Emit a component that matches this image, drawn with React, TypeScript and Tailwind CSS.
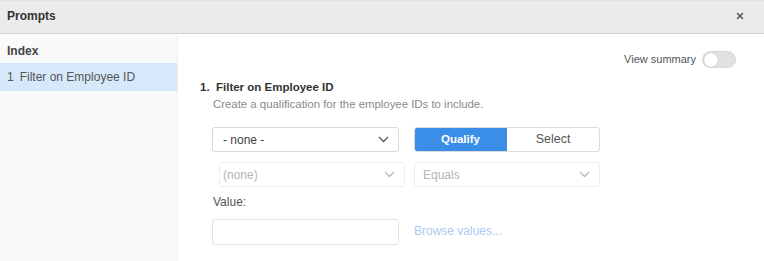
import { X } from 'lucide-react'

function Chevron({ className }: { className: string }) {
  return (
    <svg width="11" height="7" viewBox="0 0 11 7" className={className} fill="none">
      <polyline points="1,1 5.5,5.5 10,1" stroke="currentColor" strokeWidth="1.3" />
    </svg>
  )
}

export default function App() {
  return (
    <div
      className="w-[764px] h-[261px] flex flex-col bg-white overflow-hidden"
      style={{ fontFamily: '"Liberation Sans", Arial, sans-serif' }}
    >
      {/* header */}
      <div className="h-[34px] shrink-0 flex items-center justify-between bg-[#ebebeb] border-t border-[#e2e2e2] border-b border-b-[#d4d4d4] pl-[7px] pr-[19px] pb-[2px]">
        <span className="text-[12px] font-bold text-[#333]">Prompts</span>
        <X className="w-[10px] h-[10px] text-[#555]" strokeWidth={3.5} />
      </div>

      <div className="flex flex-1 min-h-0">
        {/* index sidebar */}
        <div className="w-[178px] shrink-0 bg-[#fafafa] border-r border-[#f0f0f0]">
          <div className="pt-[10px] pl-[7px] h-[29px] text-[12px] font-bold text-[#444] leading-[14px]">Index</div>
          <div className="h-[28px] flex items-center pl-[7px] bg-[#d8e8fb] text-[12px] text-[#555]">
            <span className="mr-[6px]">1</span>Filter on Employee ID
          </div>
        </div>

        {/* main */}
        <div className="flex-1 pt-[17px] pl-[22px] pr-[28px]">
          <div className="h-[17px] flex items-center justify-end gap-[6px]">
            <span className="text-[11px] text-[#555]">View summary</span>
            <div className="w-[34px] h-[17px] rounded-full bg-[#e2e2e2] border border-[#d8d8d8] flex items-center pl-[1px]">
              <div className="w-[14px] h-[14px] rounded-full bg-white shadow-[0_0_1px_rgba(0,0,0,0.3)]" />
            </div>
          </div>

          <div className="mt-[11px] text-[11.5px] leading-[16px] font-bold text-[#333]">
            1.&nbsp;&nbsp;Filter on Employee ID
          </div>
          <div className="mt-[2px] ml-[13px] text-[11.4px] leading-[14px] text-[#8a8a8a]">
            Create a qualification for the employee IDs to include.
          </div>

          <div className="ml-[12px]">
            <div className="mt-[16px] flex gap-[15px]">
              <div className="w-[187px] h-[25px] border border-[#d9d9d9] rounded-[3px] flex items-center justify-between pl-[10px] pr-[9px] text-[12px] text-[#444]">
                <span>- none -</span>
                <Chevron className="text-[#555]" />
              </div>
              <div className="w-[186px] h-[25px] flex rounded-[3px] overflow-hidden border border-[#dcdcdc]">
                <div className="w-[93px] bg-[#3b8ee8] text-white font-bold text-[11.5px] flex items-center justify-center -my-px -ml-px">
                  Qualify
                </div>
                <div className="flex-1 text-[#555] text-[12.5px] flex items-center justify-center">Select</div>
              </div>
            </div>

            <div className="mt-[10px] flex gap-[9px]">
              <div className="ml-[7px] w-[186px] h-[25px] border border-[#eeeeee] rounded-[3px] flex items-center justify-between pl-[3px] pr-[9px] text-[12px] text-[#b5b5b5]">
                <span>(none)</span>
                <Chevron className="text-[#b8b8b8]" />
              </div>
              <div className="w-[186px] h-[25px] border border-[#eeeeee] rounded-[3px] flex items-center justify-between pl-[8px] pr-[9px] text-[12px] text-[#b5b5b5]">
                <span>Equals</span>
                <Chevron className="text-[#b8b8b8]" />
              </div>
            </div>

            <div className="mt-[8px] ml-[1px] text-[12px] leading-[14px] text-[#555]">Value:</div>

            <div className="mt-[10px] flex items-center gap-[15px]">
              <div className="w-[187px] h-[26px] border border-[#e3e3e3] rounded-[3px]" />
              <span className="text-[12px] text-[#a9cbf2] -mt-[2px]">Browse values...</span>
            </div>
          </div>
        </div>
      </div>
    </div>
  )
}
